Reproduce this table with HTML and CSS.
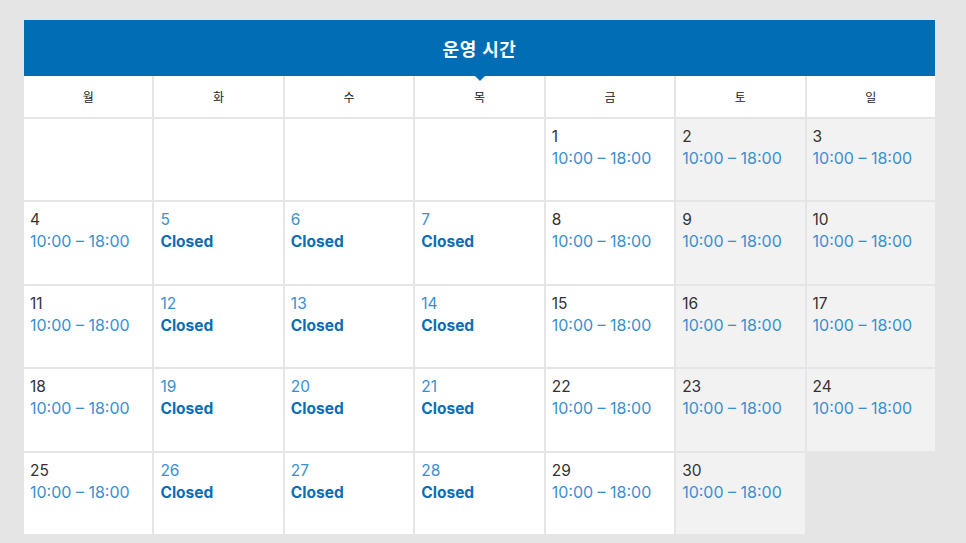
FILE: index.html
```html
<!DOCTYPE html>
<html lang="ko">
<head>
<meta charset="utf-8">
<title>운영 시간</title>
<link rel="stylesheet" href="styles.css">
</head>
<body>
<div class="calendar">
  <div class="cal-header">
    <h2 class="cal-title">운영 시간</h2>
    <span class="pointer"></span>
  </div>
  <div class="grid">
    <div class="dow">월</div><div class="dow">화</div><div class="dow">수</div><div class="dow">목</div><div class="dow">금</div><div class="dow">토</div><div class="dow">일</div>

    <div class="cell"></div><div class="cell"></div><div class="cell"></div><div class="cell"></div>
    <div class="cell"><span class="num">1</span><span class="time">10:00 – 18:00</span></div>
    <div class="cell weekend"><span class="num">2</span><span class="time">10:00 – 18:00</span></div>
    <div class="cell weekend"><span class="num">3</span><span class="time">10:00 – 18:00</span></div>

    <div class="cell"><span class="num">4</span><span class="time">10:00 – 18:00</span></div>
    <div class="cell closed"><span class="num">5</span><span class="status">Closed</span></div>
    <div class="cell closed"><span class="num">6</span><span class="status">Closed</span></div>
    <div class="cell closed"><span class="num">7</span><span class="status">Closed</span></div>
    <div class="cell"><span class="num">8</span><span class="time">10:00 – 18:00</span></div>
    <div class="cell weekend"><span class="num">9</span><span class="time">10:00 – 18:00</span></div>
    <div class="cell weekend"><span class="num">10</span><span class="time">10:00 – 18:00</span></div>

    <div class="cell"><span class="num">11</span><span class="time">10:00 – 18:00</span></div>
    <div class="cell closed"><span class="num">12</span><span class="status">Closed</span></div>
    <div class="cell closed"><span class="num">13</span><span class="status">Closed</span></div>
    <div class="cell closed"><span class="num">14</span><span class="status">Closed</span></div>
    <div class="cell"><span class="num">15</span><span class="time">10:00 – 18:00</span></div>
    <div class="cell weekend"><span class="num">16</span><span class="time">10:00 – 18:00</span></div>
    <div class="cell weekend"><span class="num">17</span><span class="time">10:00 – 18:00</span></div>

    <div class="cell"><span class="num">18</span><span class="time">10:00 – 18:00</span></div>
    <div class="cell closed"><span class="num">19</span><span class="status">Closed</span></div>
    <div class="cell closed"><span class="num">20</span><span class="status">Closed</span></div>
    <div class="cell closed"><span class="num">21</span><span class="status">Closed</span></div>
    <div class="cell"><span class="num">22</span><span class="time">10:00 – 18:00</span></div>
    <div class="cell weekend"><span class="num">23</span><span class="time">10:00 – 18:00</span></div>
    <div class="cell weekend"><span class="num">24</span><span class="time">10:00 – 18:00</span></div>

    <div class="cell"><span class="num">25</span><span class="time">10:00 – 18:00</span></div>
    <div class="cell closed"><span class="num">26</span><span class="status">Closed</span></div>
    <div class="cell closed"><span class="num">27</span><span class="status">Closed</span></div>
    <div class="cell closed"><span class="num">28</span><span class="status">Closed</span></div>
    <div class="cell"><span class="num">29</span><span class="time">10:00 – 18:00</span></div>
    <div class="cell weekend"><span class="num">30</span><span class="time">10:00 – 18:00</span></div>
  </div>
</div>
</body>
</html>
```
FILE: styles.css
```css
* { box-sizing: border-box; }
html, body {
  margin: 0;
  padding: 0;
  background: #e5e5e5;
}
body {
  padding: 20px 0 0 24px;
  font-family: Inter, "Noto Sans CJK KR", sans-serif;
}
.calendar {
  width: 911px;
}
.cal-header {
  position: relative;
  height: 56px;
  background: #006db5;
  display: flex;
  align-items: center;
  justify-content: center;
}
.cal-title {
  margin: 0;
  color: #fff;
  font-family: "Noto Sans CJK KR", sans-serif;
  font-size: 18px;
  font-weight: 700;
  letter-spacing: 0.5px;
}
.pointer {
  position: absolute;
  left: 50%;
  bottom: -5px;
  margin-left: -5px;
  width: 0;
  height: 0;
  border-left: 5px solid transparent;
  border-right: 5px solid transparent;
  border-top: 5px solid #006db5;
}
.grid {
  display: grid;
  grid-template-columns: repeat(7, 1fr);
  grid-template-rows: 40.5px repeat(5, 81.6px);
  gap: 2px;
  margin-top: 0;
}
.dow {
  background: #fff;
  display: flex;
  align-items: center;
  justify-content: center;
  font-family: "Noto Sans CJK KR", sans-serif;
  font-size: 12px;
  color: #222;
}
.cell {
  background: #fff;
  padding: 7px 6px;
  display: flex;
  flex-direction: column;
}
.cell.weekend { background: #f2f2f2; }
.num {
  font-size: 15.5px;
  line-height: 21px;
  color: #333;
}
.time {
  font-size: 16px;
  line-height: 23px;
  color: #3a8fd0;
  letter-spacing: 0;
  word-spacing: 0;
}
.closed .num { color: #3a8fd0; }
.status {
  font-size: 15.5px;
  line-height: 23px;
  font-weight: 700;
  color: #0b6db4;
}
```
